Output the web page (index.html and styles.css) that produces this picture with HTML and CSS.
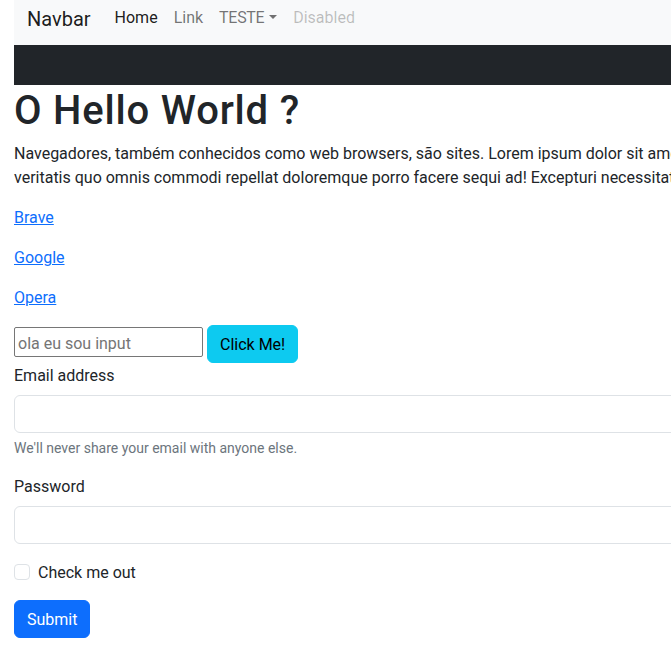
FILE: index.html
```html
<!DOCTYPE html>
<html lang="pt-BR">
<head>
<meta charset="utf-8">
<title>Hello World</title>
<link rel="stylesheet" href="styles.css">
</head>
<body>
<div class="page">
  <nav class="navbar">
    <a class="navbar-brand" href="#">Navbar</a>
    <ul class="navbar-nav">
      <li><a class="nav-link active" href="#">Home</a></li>
      <li><a class="nav-link" href="#">Link</a></li>
      <li><a class="nav-link dropdown-toggle" href="#">TESTE</a></li>
      <li><a class="nav-link disabled" href="#">Disabled</a></li>
    </ul>
  </nav>
  <div class="dark-bar"></div>
  <main class="content">
    <h1 class="title">O Hello World ?</h1>
    <p class="lead-text">Navegadores, também conhecidos como web browsers, são sites. Lorem ipsum dolor sit amet consectetur adipisicing elit. Quisquam,<br>veritatis quo omnis commodi repellat doloremque porro facere sequi ad! Excepturi necessitatibus, dolorum ipsa voluptates.</p>
    <p class="link-row"><a href="#">Brave</a></p>
    <p class="link-row"><a href="#">Google</a></p>
    <p class="link-row"><a href="#">Opera</a></p>
    <div class="inline-row">
      <input class="plain-input" type="text" placeholder="ola eu sou input">
      <button class="btn btn-info" type="button">Click Me!</button>
    </div>
    <form class="login-form">
      <div class="field">
        <label class="form-label" for="email">Email address</label>
        <input class="form-control" type="email" id="email">
        <div class="form-text">We'll never share your email with anyone else.</div>
      </div>
      <div class="field">
        <label class="form-label" for="pass">Password</label>
        <input class="form-control" type="password" id="pass">
      </div>
      <div class="field form-check">
        <input class="check-input" type="checkbox" id="check">
        <label class="check-label" for="check">Check me out</label>
      </div>
      <button class="btn btn-primary" type="submit">Submit</button>
    </form>
  </main>
</div>
</body>
</html>
```

FILE: styles.css
```css
html {
  overflow: hidden;
}
body {
  margin: 0;
  font-family: Roboto, "Open Sans", sans-serif;
  font-size: 16px;
  line-height: 1.5;
  color: #212529;
  background: #fff;
}
.page {
  width: 1100px;
  padding-left: 14px;
}
.navbar {
  display: flex;
  align-items: flex-start;
  height: 45px;
  background: #f8f9fa;
  padding: 0 12px 0 13px;
}
.navbar-brand {
  font-size: 20px;
  line-height: 30px;
  padding-top: 4px;
  margin-right: 16px;
  color: rgba(0, 0, 0, 0.9);
  text-decoration: none;
  white-space: nowrap;
}
.navbar-nav {
  display: flex;
  list-style: none;
  margin: 0;
  padding: 0;
}
.nav-link {
  display: block;
  padding: 6px 8px 0;
  line-height: 24px;
  color: rgba(0, 0, 0, 0.55);
  text-decoration: none;
}
.nav-link.active {
  color: rgba(0, 0, 0, 0.9);
}
.nav-link.disabled {
  color: rgba(0, 0, 0, 0.25);
}
.dropdown-toggle {
  letter-spacing: -0.3px;
}
.dropdown-toggle::after {
  display: inline-block;
  margin-left: 0.3em;
  vertical-align: 0.255em;
  content: "";
  border-top: 0.3em solid;
  border-right: 0.3em solid transparent;
  border-left: 0.3em solid transparent;
}
.dark-bar {
  height: 40px;
  background: #212529;
}
.title {
  margin: 0 0 6px;
  padding-top: 2px;
  font-size: 40px;
  font-weight: 500;
  line-height: 1.2;
  letter-spacing: 0.8px;
}
.lead-text {
  margin: 0 0 15px;
  padding-top: 1px;
  white-space: nowrap;
}
.link-row {
  margin: 0 0 15px;
  padding-top: 1px;
}
.link-row a {
  color: #0d6efd;
}
.inline-row {
  display: flex;
  align-items: flex-start;
  gap: 4px;
}
.plain-input {
  box-sizing: border-box;
  width: 189px;
  height: 30px;
  margin-top: 2px;
  padding: 2px 3px 0;
  border: 1px solid #767676;
  border-radius: 2px;
  font: inherit;
  line-height: 24px;
  color: #212529;
}
.plain-input::placeholder {
  color: #757575;
}
.btn {
  display: inline-block;
  padding: 7px 12px 5px;
  font: inherit;
  line-height: 24px;
  border: 1px solid transparent;
  border-radius: 6px;
  cursor: pointer;
}
.btn-info {
  background: #0dcaf0;
  border-color: #0dcaf0;
  color: #000;
}
.btn-primary {
  background: #0d6efd;
  border-color: #0d6efd;
  color: #fff;
}
.login-form {
  margin: 0;
}
.field {
  margin-bottom: 16px;
}
.form-label {
  display: inline-block;
  padding-top: 1px;
  margin-bottom: 7px;
}
.form-control {
  display: block;
  box-sizing: border-box;
  width: 100%;
  padding: 6px 12px;
  font: inherit;
  line-height: 24px;
  color: #212529;
  background: #fff;
  border: 1px solid #dee2e6;
  border-radius: 6px;
}
.form-text {
  margin-top: 4px;
  padding-top: 1px;
  font-size: 14px;
  line-height: 20px;
  color: #6c757d;
}
.form-check {
  display: flex;
  align-items: flex-start;
  min-height: 24px;
}
.check-input {
  appearance: none;
  width: 16px;
  height: 16px;
  margin: 4px 8px 0 0;
  border: 1px solid #dee2e6;
  border-radius: 4px;
  background: #fff;
  flex-shrink: 0;
}
.check-label {
  padding-top: 1px;
  line-height: 23px;
}
```
